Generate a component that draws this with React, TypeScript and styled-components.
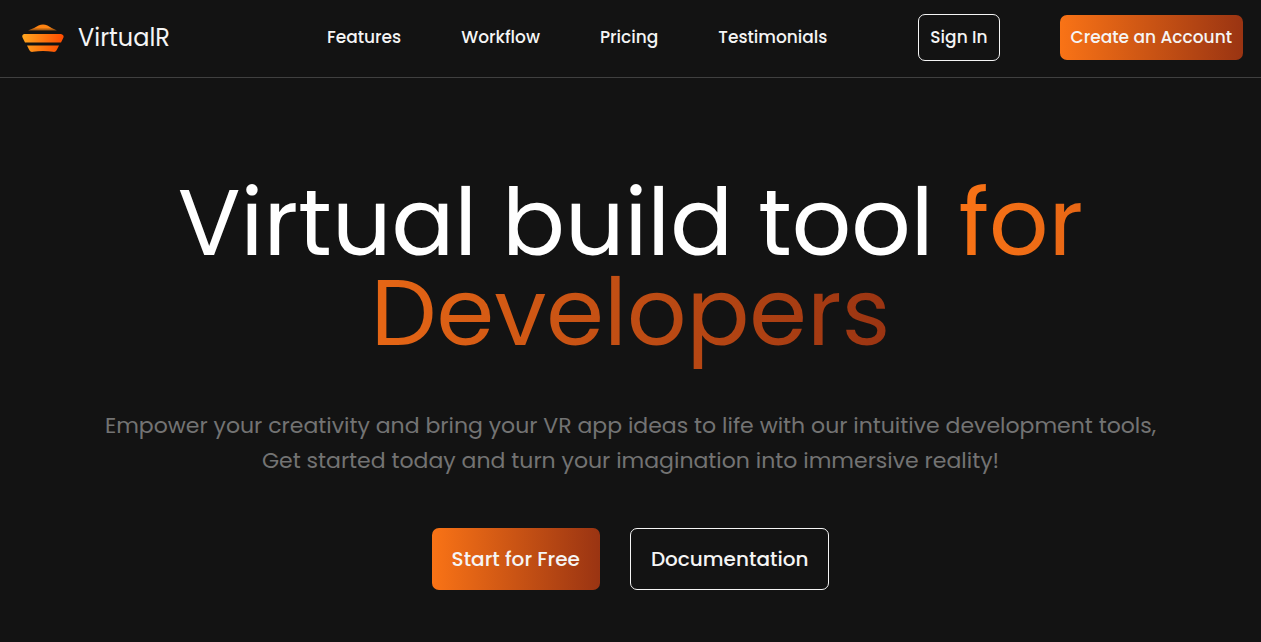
import React from "react";
import styled, { createGlobalStyle } from "styled-components";

const GlobalStyle = createGlobalStyle`
  *, *::before, *::after { box-sizing: border-box; }
  body {
    margin: 0;
    background: #131313;
    color: #fff;
    font-family: Poppins, Inter, "Liberation Sans", sans-serif;
  }
`;

const Header = styled.header`
  display: flex;
  align-items: center;
  justify-content: space-between;
  padding: 14px 18px 16px 20px;
  border-bottom: 1px solid #404040;
`;

const Brand = styled.a`
  display: flex;
  align-items: center;
  gap: 12px;
  min-width: 216px;
  color: #f5f5f5;
  font-size: 24px;
  line-height: 36px;
  text-decoration: none;
`;

const NavList = styled.ul`
  display: flex;
  gap: 60px;
  margin: 0;
  padding: 0;
  list-style: none;
`;

const NavLink = styled.a`
  color: #f5f5f5;
  font-size: 17px;
  font-weight: 500;
  line-height: 27px;
  text-decoration: none;
`;

const HeaderActions = styled.div`
  display: flex;
  align-items: center;
  gap: 60px;
`;

const Button = styled.button<{ $filled?: boolean; $large?: boolean }>`
  padding: ${(p) => (p.$large ? "15px 20px" : "9px 11px")};
  border: ${(p) => (p.$filled ? "0" : "1px solid #f5f5f5")};
  border-radius: 7px;
  background: ${(p) => (p.$filled ? "linear-gradient(to right, #f97316, #9a3412)" : "transparent")};
  color: #f5f5f5;
  font-family: inherit;
  font-size: ${(p) => (p.$large ? "20px" : "17px")};
  font-weight: 500;
  line-height: ${(p) => (p.$large ? "30px" : "27px")};
  white-space: nowrap;
  cursor: pointer;
`;

const Hero = styled.main`
  display: flex;
  flex-direction: column;
  align-items: center;
  padding: 100px 20px 52px;
  text-align: center;
`;

const Title = styled.h1`
  max-width: 1100px;
  margin: 0;
  font-size: 93px;
  font-weight: 400;
  line-height: 90px;
`;

const Accent = styled.span`
  padding-bottom: 8px;
  background: linear-gradient(to right, #f97316, #9a3412);
  background-clip: text;
  -webkit-background-clip: text;
  color: transparent;
`;

const Lead = styled.p`
  max-width: 1120px;
  margin: 50px 0;
  color: #737373;
  font-size: 22px;
  line-height: 35px;
`;

const HeroActions = styled.div`
  display: flex;
  align-items: stretch;
  gap: 30px;
`;

const Logo = () => (
  <svg width="46" height="32" viewBox="0 0 46 32" aria-hidden="true">
    <defs>
      <linearGradient id="sunset" gradientUnits="userSpaceOnUse" x1="2" y1="20" x2="42" y2="26">
        <stop offset="0" stopColor="#ffa51f" />
        <stop offset="1" stopColor="#ff4b00" />
      </linearGradient>
      <linearGradient id="dome" x1="0" y1="0" x2="0" y2="1">
        <stop offset="0.5" stopColor="#ff8412" />
        <stop offset="1" stopColor="#ff8412" stopOpacity="0.5" />
      </linearGradient>
    </defs>
    <path fill="url(#dome)" d="M8 8.500Q15 6 18.500 3.500Q23 1.500 27.500 3.500Q31 6 37 8.500Z" />
    <path fill="url(#sunset)" d="M4 12H41Q45 13 43 16.500L41 20.500H5L3 16.500Q1 13 4 12Z" />
    <path fill="url(#sunset)" d="M7 23.500H39L37 27.500Q36 30.500 33 29.800Q23 28 13 29.800Q10 30.500 9 27.500Z" />
  </svg>
);

const links = ["Features", "Workflow", "Pricing", "Testimonials"];

export default function App() {
  return (
    <>
      <GlobalStyle />
      <Header>
        <Brand href="#">
          <Logo />
          VirtualR
        </Brand>
        <nav>
          <NavList>
            {links.map((label) => (
              <li key={label}>
                <NavLink href={`#${label.toLowerCase()}`}>{label}</NavLink>
              </li>
            ))}
          </NavList>
        </nav>
        <HeaderActions>
          <Button>Sign In</Button>
          <Button $filled>Create an Account</Button>
        </HeaderActions>
      </Header>
      <Hero>
        <Title>
          Virtual build tool <Accent>for<br />Developers</Accent>
        </Title>
        <Lead>
          Empower your creativity and bring your VR app ideas to life with our intuitive development tools,
          <br />
          Get started today and turn your imagination into immersive reality!
        </Lead>
        <HeroActions>
          <Button $filled $large>Start for Free</Button>
          <Button $large>Documentation</Button>
        </HeroActions>
      </Hero>
    </>
  );
}
